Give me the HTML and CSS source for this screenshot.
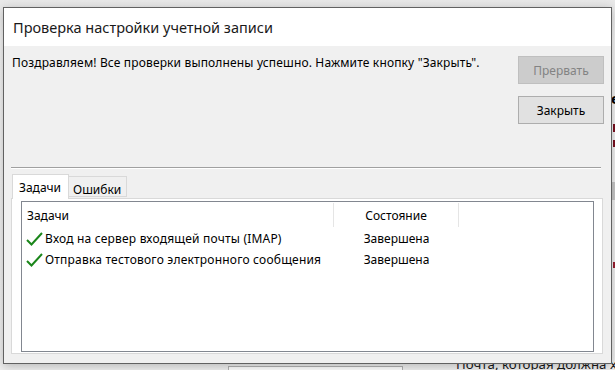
FILE: index.html
```html
<!DOCTYPE html>
<html lang="ru">
<head>
    <meta charset="UTF-8">
    <title>Проверка настройки учетной записи</title>
    <link rel="stylesheet" href="styles.css">
</head>
<body>
    <div class="desk">
        <!-- window behind the dialog, only edges are visible -->
        <div class="back">
            <span class="back-e">е</span>
            <span class="back-mark mark-1"></span>
            <span class="back-mark mark-2"></span>
            <span class="back-band"></span>
            <span class="back-mark mark-3"></span>
            <div class="back-field"></div>
            <span class="back-text">Почта, которая должна храниться на компьютере</span>
        </div>

        <div class="dialog">
            <div class="dialog-title">Проверка настройки учетной записи</div>
            <div class="dialog-body">
                <div class="top-row">
                    <p class="message">Поздравляем! Все проверки выполнены успешно. Нажмите кнопку "Закрыть".</p>
                    <div class="buttons">
                        <button class="btn" disabled>Прервать</button>
                        <button class="btn">Закрыть</button>
                    </div>
                </div>

                <div class="separator"></div>

                <div class="tabs">
                    <div class="tab active">Задачи</div>
                    <div class="tab">Ошибки</div>
                </div>
                <div class="tab-panel">
                    <div class="list">
                        <div class="list-head">
                            <div class="col col-task">Задачи</div>
                            <div class="col col-state">Состояние</div>
                            <div class="col col-rest"></div>
                        </div>
                        <div class="list-rows">
                            <div class="list-row">
                                <div class="col col-task">
                                    <svg class="check" viewBox="0 0 17 14" width="17" height="14"><path d="M1 8 L5.5 12.5 L16 1" fill="none" stroke="#1a861a" stroke-width="2"/></svg>
                                    Вход на сервер входящей почты (IMAP)
                                </div>
                                <div class="col col-state">Завершена</div>
                            </div>
                            <div class="list-row">
                                <div class="col col-task">
                                    <svg class="check" viewBox="0 0 17 14" width="17" height="14"><path d="M1 8 L5.5 12.5 L16 1" fill="none" stroke="#1a861a" stroke-width="2"/></svg>
                                    Отправка тестового электронного сообщения
                                </div>
                                <div class="col col-state">Завершена</div>
                            </div>
                        </div>
                    </div>
                </div>
            </div>
        </div>
    </div>
</body>
</html>
```

FILE: styles.css
```css
* {
    box-sizing: border-box;
}
body {
    margin: 0;
    font-family: 'Noto Sans', 'DejaVu Sans', sans-serif;
    font-size: 12px;
    color: #000;
    background-color: #f0f0f0;
    overflow: hidden;
}
.desk {
    position: relative;
    width: 615px;
    height: 370px;
    overflow: hidden;
    background: linear-gradient(#e9e9e9, #f3f3f3 40px, #f0f0f0);
}

/* background window */
.back-e {
    position: absolute;
    left: 611px;
    top: 88px;
    font-weight: bold;
    font-size: 15px;
}
.back-mark {
    position: absolute;
    left: 613px;
    width: 2px;
    background: #7a1020;
}
.mark-1 { top: 124px; height: 8px; }
.mark-2 { top: 140px; height: 7px; }
.mark-3 { top: 262px; height: 6px; background: #9a2030; }
.back-band {
    position: absolute;
    left: 612px;
    top: 182px;
    width: 3px;
    height: 18px;
    background: #c8c8c8;
}
.back-field {
    position: absolute;
    left: 228px;
    top: 366px;
    width: 175px;
    height: 20px;
    background: #fff;
    border: 1px solid #b4b4b4;
}
.back-text {
    position: absolute;
    left: 456px;
    top: 354px;
    font-size: 13.3px;
    line-height: 20px;
    color: #1a1a1a;
    white-space: nowrap;
}

/* dialog window */
.dialog {
    position: absolute;
    left: 3px;
    top: 7px;
    width: 609px;
    height: 357px;
    display: flex;
    flex-direction: column;
    border: 1px solid #616161;
    background: #f0f0f0;
    box-shadow: 0 2px 10px rgba(0,0,0,0.25);
    z-index: 1;
}
.dialog-title {
    height: 38px;
    display: flex;
    align-items: center;
    padding-left: 9px;
    background: #fff;
    font-size: 14.5px;
    color: #1a1a1a;
}
.dialog-body {
    flex: 1;
    display: flex;
    flex-direction: column;
    padding: 10px 7px 9px 8px;
}
.top-row {
    display: flex;
    justify-content: space-between;
    align-items: flex-start;
}
.message {
    margin: 0;
    line-height: 14px;
    letter-spacing: 0.15px;
}
.buttons {
    display: flex;
    flex-direction: column;
    gap: 12px;
}
.btn {
    width: 86px;
    height: 28px;
    padding: 0;
    font-family: inherit;
    font-size: 12px;
    color: #000;
    background: #e1e1e1;
    border: 1px solid #adadad;
}
.btn:disabled {
    color: #838383;
    background: #cccccc;
    border-color: #bfbfbf;
}
.separator {
    height: 2px;
    margin: 43px 3px 0 -1px;
    border-top: 1px solid #a0a0a0;
    border-bottom: 1px solid #fff;
}

/* tabs */
.tabs {
    display: flex;
    align-items: flex-end;
    margin-top: 5px;
    position: relative;
    z-index: 1;
}
.tab {
    height: 21px;
    width: 58px;
    padding: 4px 0 0 4px;
    background: #f0f0f0;
    border: 1px solid #d9d9d9;
    border-left: none;
    margin-bottom: 1px;
}
.tab.active {
    height: 25px;
    width: 57px;
    padding: 4px 0 0 6px;
    background: #fff;
    border-left: 1px solid #d9d9d9;
    border-bottom: none;
    margin-bottom: -1px;
}
.tab-panel {
    flex: 1;
    margin: 0 1px 0 -1px;
    padding: 2px 8px 1px 9px;
    background: #fff;
    border: 1px solid #d9d9d9;
}
.list {
    height: 100%;
    border: 1px solid #828790;
    background: #fff;
}
.list-head {
    display: flex;
    height: 24px;
    align-items: stretch;
}
.list-head .col {
    display: flex;
    align-items: center;
    margin-top: 1px;
    margin-bottom: -1px;
    border-right: 1px solid #e5e5e5;
}
.list-head .col-rest {
    border-right: none;
}
.list-rows {
    padding-top: 2px;
}
.list-row {
    display: flex;
    height: 21px;
    align-items: center;
}
.col-task {
    width: 312px;
    padding-left: 5px;
    display: flex;
    align-items: center;
}
.list-head .col-task {
    padding-left: 5px;
}
.list-row .col-task {
    padding-left: 4px;
    letter-spacing: 0.2px;
}
.col-state {
    width: 125px;
    justify-content: center;
    text-align: center;
}
.check {
    margin-right: 2px;
    flex-shrink: 0;
}
```
